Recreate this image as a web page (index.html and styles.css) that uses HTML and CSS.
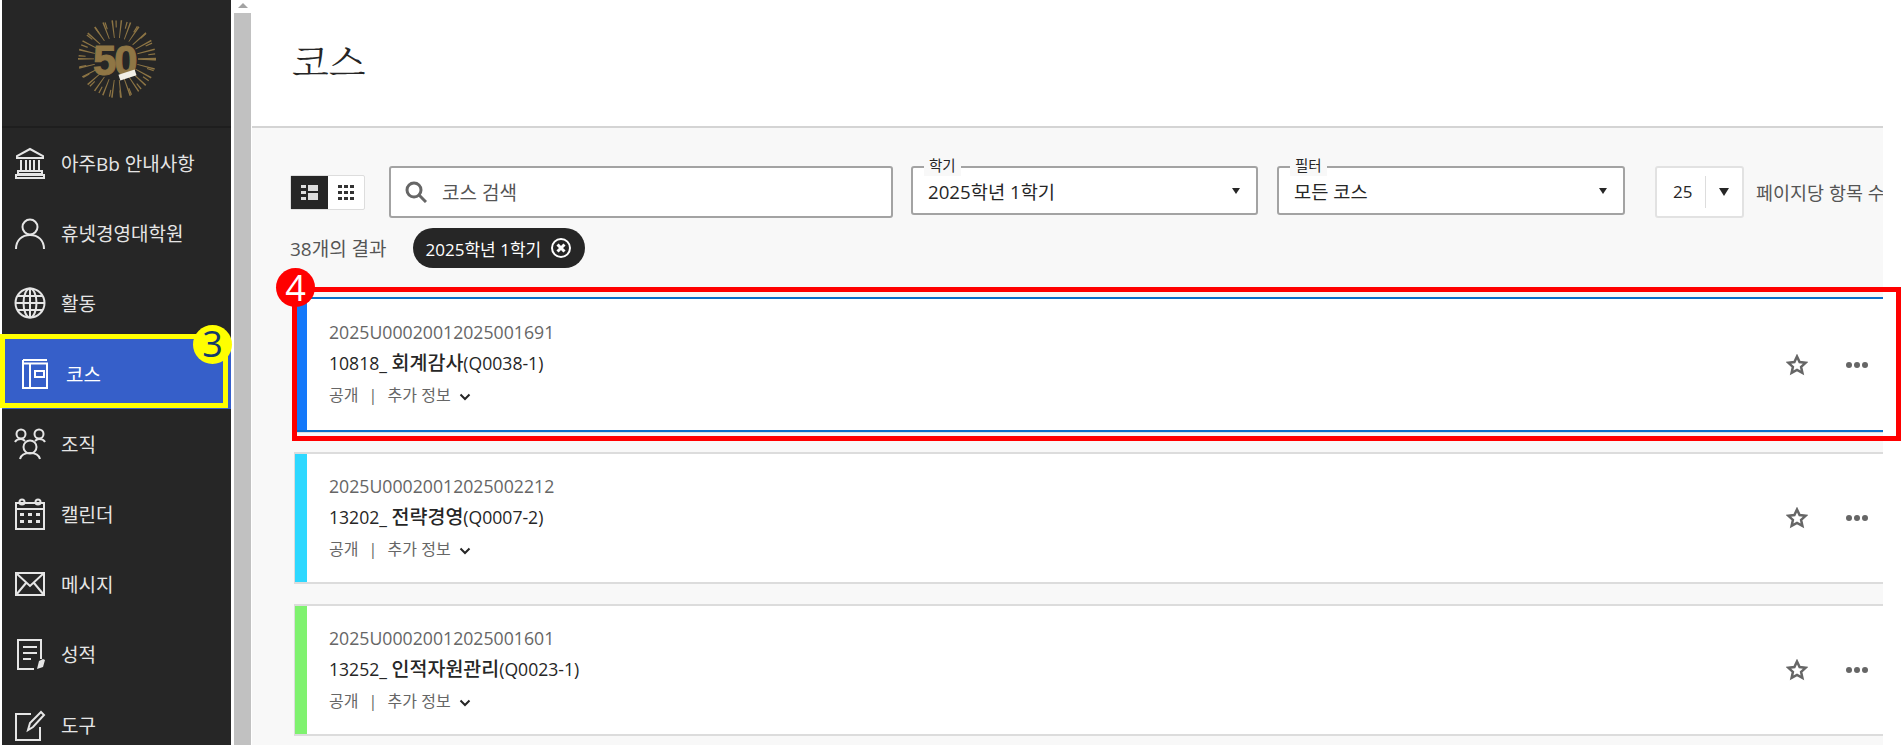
FILE: index.html
```html
<!DOCTYPE html>
<html lang="ko">
<head>
  <meta charset="utf-8">
  <meta name="viewport" content="width=device-width, initial-scale=1.0">
  <title>코스</title>
  <link rel="stylesheet" href="styles.css">
</head>
<body>
  <!-- Sidebar -->
  <nav class="sidebar">
    <div class="brand">
      <div class="logo">
        <svg class="logo-rays" viewBox="0 0 80 80">
          <circle cx="40" cy="40" r="30" fill="none" stroke="#8c7444" stroke-width="18" stroke-dasharray="1.2 6"/>
          <circle cx="40" cy="40" r="35" fill="none" stroke="#8c7444" stroke-width="7" stroke-dasharray="1.2 9"/>
          <circle cx="38" cy="40" r="21" fill="#262626"/>
        </svg>
        <span class="logo-num">50</span>
        <span class="logo-ribbon"></span>
      </div>
    </div>

    <a class="nav-item">
      <svg class="nav-icon" viewBox="0 0 32 32"><path d="M16 2 3 9v2h26V9zM2 28h28v3H2zM4 24h24v3H4zM7 13v10M12 13v10M16 13v10M20 13v10M25 13v10"/></svg>
      아주Bb 안내사항
    </a>
    <a class="nav-item">
      <svg class="nav-icon" viewBox="0 0 32 32"><circle cx="16" cy="10" r="7.5"/><path d="M2 32c0-9 6-14 14-14s14 5 14 14"/></svg>
      휴넷경영대학원
    </a>
    <a class="nav-item">
      <svg class="nav-icon" viewBox="0 0 32 32"><circle cx="16" cy="16" r="14.5"/><ellipse cx="16" cy="16" rx="6.5" ry="14.5"/><path d="M16 1.500v29M1.500 16h29M3.500 9h25M3.500 23h25"/></svg>
      활동
    </a>
    <div class="nav-item is-active">
      <svg class="nav-icon" viewBox="0 0 26 30"><path d="M1 1h24M1 4.500h24V29H1zM1 1v3.500M8 4.500V29M13 12h9v6h-9z"/></svg>
      코스
      <span class="mark-box"></span>
      <span class="mark-num mark-yellow">3</span>
    </div>
    <a class="nav-item">
      <svg class="nav-icon" viewBox="0 0 32 32"><circle cx="7" cy="6" r="4.500"/><circle cx="25" cy="6" r="4.500"/><circle cx="16" cy="19" r="6.500"/><path d="M1 14c1-2 3-3 6-3 2 0 3 1 4 2M31 14c-1-2-3-3-6-3-2 0-3 1-4 2M6 31c1-4 4-6 10-6s9 2 10 6"/></svg>
      조직
    </a>
    <a class="nav-item">
      <svg class="nav-icon cal" viewBox="0 0 32 32"><path d="M2 5h28v26H2zM2 11h28"/><circle cx="8" cy="4" r="2.500"/><circle cx="24" cy="4" r="2.500"/><path class="dots" d="M6 15h4v3H6zM14 15h4v3h-4zM22 15h4v3h-4zM6 22h4v3H6zM14 22h4v3h-4zM22 22h4v3h-4z"/></svg>
      캘린더
    </a>
    <a class="nav-item">
      <svg class="nav-icon" viewBox="0 0 32 32"><path d="M2 5h28v22H2zM2 5l14 13L30 5M2 27l10-12M30 27 20 15"/></svg>
      메시지
    </a>
    <a class="nav-item">
      <svg class="nav-icon" viewBox="0 0 32 32"><path d="M20 31H4V2h23v19M9 9h14M9 15h14M9 21h8"/><path class="dots" d="m23 31 2-8 4-2 2 1-2 7z"/></svg>
      성적
    </a>
    <a class="nav-item">
      <svg class="nav-icon" viewBox="0 0 32 32"><path d="M17 5H2v26h24V18M14 21l2-7L27 3l3 3-11 12z"/></svg>
      도구
    </a>
  </nav>

  <!-- Fake scrollbar of the sidebar frame -->
  <div class="scrollbar">
    <div class="scroll-arrow"></div>
    <div class="scroll-thumb"></div>
  </div>

  <main class="main">
    <header class="page-header">
      <h1 class="page-title">코스</h1>
    </header>

    <section class="toolbar">
      <div class="view-toggle">
        <span class="toggle-btn is-on">
          <svg width="17" height="15" viewBox="0 0 17 15"><path d="M0 0h5v3H0zM0 6h5v3H0zM0 12h5v3H0zM7 0h10v6H7zM7 8h10v7H7z"/></svg>
        </span>
        <span class="toggle-btn">
          <svg width="16" height="15" viewBox="0 0 16 15"><path d="M0 0h4v3H0zM6 0h4v3H6zM12 0h4v3h-4zM0 6h4v3H0zM6 6h4v3H6zM12 6h4v3h-4zM0 12h4v3H0zM6 12h4v3H6zM12 12h4v3h-4z"/></svg>
        </span>
      </div>

      <div class="search-box">
        <svg class="search-icon" width="22" height="22" viewBox="0 0 22 22"><circle cx="9" cy="9" r="7"/><path d="m14 14 7 7"/></svg>
        코스 검색
      </div>

      <div class="select select-term">
        <span class="select-label">학기</span>
        2025학년 1학기
        <span class="caret"></span>
      </div>
      <div class="select select-filter">
        <span class="select-label">필터</span>
        모든 코스
        <span class="caret"></span>
      </div>

      <div class="per-page">
        <span class="per-page-num">25</span>
        <span class="caret caret-big"></span>
      </div>
      <span class="per-page-text">페이지당 항목 수</span>
    </section>

    <section class="results">
      <span class="results-count">38개의 결과</span>
      <span class="chip">
        2025학년 1학기
        <svg width="22" height="22" viewBox="0 0 22 22"><circle cx="11" cy="11" r="9" fill="none" stroke="#fff" stroke-width="2"/><path d="m7.500 7.500 7 7M14.500 7.500l-7 7" stroke="#fff" stroke-width="3"/></svg>
      </span>
    </section>

    <section class="course-list">
      <article class="course-card is-marked">
        <span class="course-bar bar-blue"></span>
        <div class="course-body">
          <div class="course-id">2025U00020012025001691</div>
          <div class="course-title">10818_ <strong>회계감사</strong>(Q0038-1)</div>
          <div class="course-meta">공개 <span class="sep">|</span> 추가 정보 <svg class="chev" width="12" height="8" viewBox="0 0 12 8"><path d="m1.500 1.500 4.500 4.500 4.500-4.500"/></svg></div>
        </div>
        <svg class="star" width="22" height="22" viewBox="0 0 22 22"><path d="m11 2.500 2.600 5.600 6 .7-4.500 4.100 1.300 6L11 16l-5.400 2.900 1.300-6L2.400 8.800l6-.7z"/></svg>
        <span class="dots"><i></i><i></i><i></i></span>
        <span class="mark-outline"></span>
        <span class="mark-num mark-red">4</span>
      </article>

      <article class="course-card">
        <span class="course-bar bar-cyan"></span>
        <div class="course-body">
          <div class="course-id">2025U00020012025002212</div>
          <div class="course-title">13202_ <strong>전략경영</strong>(Q0007-2)</div>
          <div class="course-meta">공개 <span class="sep">|</span> 추가 정보 <svg class="chev" width="12" height="8" viewBox="0 0 12 8"><path d="m1.500 1.500 4.500 4.500 4.500-4.500"/></svg></div>
        </div>
        <svg class="star" width="22" height="22" viewBox="0 0 22 22"><path d="m11 2.500 2.600 5.600 6 .7-4.500 4.100 1.300 6L11 16l-5.400 2.900 1.300-6L2.400 8.800l6-.7z"/></svg>
        <span class="dots"><i></i><i></i><i></i></span>
      </article>

      <article class="course-card">
        <span class="course-bar bar-green"></span>
        <div class="course-body">
          <div class="course-id">2025U00020012025001601</div>
          <div class="course-title">13252_ <strong>인적자원관리</strong>(Q0023-1)</div>
          <div class="course-meta">공개 <span class="sep">|</span> 추가 정보 <svg class="chev" width="12" height="8" viewBox="0 0 12 8"><path d="m1.500 1.500 4.500 4.500 4.500-4.500"/></svg></div>
        </div>
        <svg class="star" width="22" height="22" viewBox="0 0 22 22"><path d="m11 2.500 2.600 5.600 6 .7-4.500 4.100 1.300 6L11 16l-5.400 2.900 1.300-6L2.400 8.800l6-.7z"/></svg>
        <span class="dots"><i></i><i></i><i></i></span>
      </article>
    </section>
  </main>
</body>
</html>
```

FILE: styles.css
```css
* {
  margin: 0;
  padding: 0;
  box-sizing: border-box;
}

html, body {
  height: 745px;
  overflow: hidden;
}

body {
  display: flex;
  background: #fff;
  font-family: "Open Sans", "Noto Sans CJK KR", sans-serif;
  font-size: 16px;
  color: #262626;
}

/* Sidebar */
.sidebar {
  flex: none;
  position: relative;
  width: 229px;
  height: 745px;
  margin-left: 2px;
  background: #262626;
  color: #e5e5e5;
  font-size: 19px;
}

.brand {
  height: 128px;
  border-bottom: 2px solid #1e1e1e;
  padding: 19px 0 0 75px;
}

.logo {
  position: relative;
  width: 80px;
  height: 80px;
}

.logo-rays {
  width: 80px;
  height: 80px;
}

.logo-num {
  position: absolute;
  left: 16px;
  top: 18px;
  font-family: "Liberation Sans", sans-serif;
  font-size: 42px;
  font-weight: 700;
  line-height: 48px;
  letter-spacing: -2px;
  color: #8f7645;
  -webkit-text-stroke: 1px #8f7645;
}

.logo-ribbon {
  position: absolute;
  left: 42px;
  top: 53px;
  width: 17px;
  height: 6px;
  background: #f2efe6;
  transform: rotate(-18deg);
}

.nav-item {
  position: relative;
  display: flex;
  align-items: center;
  gap: 15px;
  height: 70.2px;
  padding-left: 12px;
  white-space: nowrap;
}

.nav-icon {
  flex: none;
  width: 32px;
  height: 32px;
  fill: none;
  stroke: #e5e5e5;
  stroke-width: 2;
}

.nav-icon .dots,
.cal .dots {
  fill: #e5e5e5;
  stroke: none;
}

.nav-item.is-active {
  padding-left: 20px;
  gap: 18px;
  background: #365fc9;
  color: #fff;
}

.is-active .nav-icon {
  width: 26px;
  height: 30px;
  stroke: #fff;
}

.mark-box {
  position: absolute;
  left: -2px;
  top: -5px;
  width: 228px;
  height: 74px;
  border: 5px solid #ffff00;
}

.mark-num {
  position: absolute;
  display: flex;
  align-items: center;
  justify-content: center;
  width: 39px;
  height: 39px;
  border-radius: 50%;
  font-size: 36px;
  line-height: 1;
}

.mark-yellow {
  right: -1px;
  top: -14px;
  background: #ffff00;
  color: #123a6b;
}

.mark-red {
  left: -19px;
  top: -31px;
  background: #ff0000;
  color: #fff;
}

/* Scrollbar */
.scrollbar {
  flex: none;
  width: 22px;
  height: 745px;
  padding-left: 3px;
  background: #fff;
}

.scroll-arrow {
  width: 0;
  margin: 3px 0 0 4px;
  border: 5px solid transparent;
  border-top: 0;
  border-bottom-color: #a3a3a3;
}

.scroll-thumb {
  width: 17px;
  height: 732px;
  margin-top: 5px;
  background: #c1c1c1;
}

/* Main column */
.main {
  flex: none;
  width: 1631px;
  height: 745px;
  margin-left: -1px;
  background: #f8f8f8;
}

.page-header {
  height: 128px;
  padding: 40px 0 0 40px;
  background: #fff;
  border-bottom: 2px solid #d4d4d4;
}

.page-title {
  font-family: "Noto Serif CJK KR", "Noto Sans CJK KR", serif;
  font-size: 38px;
  font-weight: 300;
  line-height: 40px;
  color: #262626;
}

.toolbar {
  display: flex;
  align-items: center;
  height: 52px;
  margin-top: 38px;
  padding-left: 38px;
  clip-path: inset(-20px 0);
}

.view-toggle {
  flex: none;
  display: flex;
  width: 75px;
  height: 35px;
  margin-right: 24px;
  background: #fff;
  border: 1px solid #ddd;
  border-radius: 2px;
}

.toggle-btn {
  flex: 1;
  display: flex;
  align-items: center;
  justify-content: center;
  fill: #333;
}

.toggle-btn.is-on {
  background: #262626;
  fill: #ddd;
}

.search-box {
  flex: none;
  display: flex;
  align-items: center;
  gap: 15px;
  width: 504px;
  height: 52px;
  margin-right: 18px;
  padding-left: 14px;
  background: #fff;
  border: 2px solid #a3a3a3;
  border-radius: 3px;
  font-size: 19px;
  color: #555;
}

.search-icon {
  fill: none;
  stroke: #666;
  stroke-width: 3;
}

.select {
  flex: none;
  position: relative;
  display: flex;
  align-items: center;
  width: 347px;
  height: 49px;
  margin-bottom: 3px;
  padding: 0 16px 0 15px;
  background: #fff;
  border: 2px solid #a3a3a3;
  border-radius: 3px;
  font-size: 18.7px;
}

.select-term {
  margin-right: 19px;
}

.select-filter {
  width: 348px;
  margin-right: 30px;
}

.select-label {
  position: absolute;
  left: 11px;
  top: -12px;
  padding: 0 5px;
  background: #f8f8f8;
  font-size: 14.5px;
  line-height: 20px;
}

.caret {
  width: 0;
  margin-left: auto;
  border: 4.5px solid transparent;
  border-bottom: 0;
  border-top: 6px solid #262626;
}

.per-page {
  flex: none;
  display: flex;
  align-items: center;
  width: 89px;
  height: 52px;
  margin-right: 12px;
  background: #fff;
  border: 2px solid #e2e2e2;
  border-radius: 3px;
  font-size: 17px;
}

.per-page-num {
  width: 49px;
  height: 32px;
  line-height: 32px;
  padding-left: 16px;
  border-right: 1px solid #ddd;
}

.caret-big {
  margin: 0 auto;
  border-width: 6px 5.5px 0;
  border-top-width: 8px;
}

.per-page-text {
  flex: none;
  font-size: 18.5px;
  color: #555;
}

.results {
  display: flex;
  align-items: center;
  gap: 26px;
  height: 40px;
  margin-top: 10px;
  padding-left: 38px;
}

.results-count {
  font-size: 19px;
  color: #555;
}

.chip {
  display: flex;
  align-items: center;
  gap: 9px;
  height: 40px;
  padding: 0 13px;
  background: #262626;
  border-radius: 20px;
  color: #fff;
  font-size: 17px;
}

/* Course cards */
.course-list {
  display: flex;
  flex-direction: column;
  gap: 20px;
  margin-top: 29px;
  padding-left: 42px;
}

.course-card {
  position: relative;
  display: flex;
  align-items: center;
  height: 132px;
  background: #fff;
  border: 1px solid #dcdcdc;
  border-width: 2px 0 2px 1px;
}

.course-card.is-marked {
  height: 135px;
  border-color: #0a6ec8;
  border-left-color: #dcdcdc;
  box-shadow: 0 1px 0 #ddd;
}

.course-bar {
  align-self: stretch;
  flex: none;
  width: 12px;
}

.bar-blue { background: #1478fa; }
.bar-cyan { background: #2ed8ff; }
.bar-green { background: #7ff26f; }

.course-body {
  flex: 1;
  padding: 0 0 1px 22px;
}

.course-id {
  font-size: 17.7px;
  line-height: 30px;
  color: #666;
}

.course-title {
  font-size: 17.6px;
  line-height: 31px;
}

.course-title strong {
  font-size: 19.5px;
  font-weight: 500;
}

.course-meta {
  font-size: 16px;
  line-height: 32px;
  color: #666;
}

.sep {
  margin: 0 6px;
}

.chev {
  margin-left: 4px;
  fill: none;
  stroke: #262626;
  stroke-width: 2;
}

.star {
  flex: none;
  margin-right: 38px;
  fill: none;
  stroke: #666;
  stroke-width: 2.5;
}

.dots {
  flex: none;
  display: flex;
  gap: 2px;
  margin-right: 15px;
}

.dots i {
  width: 6px;
  height: 6px;
  border-radius: 50%;
  background: #666;
}

.mark-outline {
  position: absolute;
  left: -3px;
  top: -12px;
  right: -18px;
  bottom: -11px;
  border: 5px solid #ff0000;
}
```
